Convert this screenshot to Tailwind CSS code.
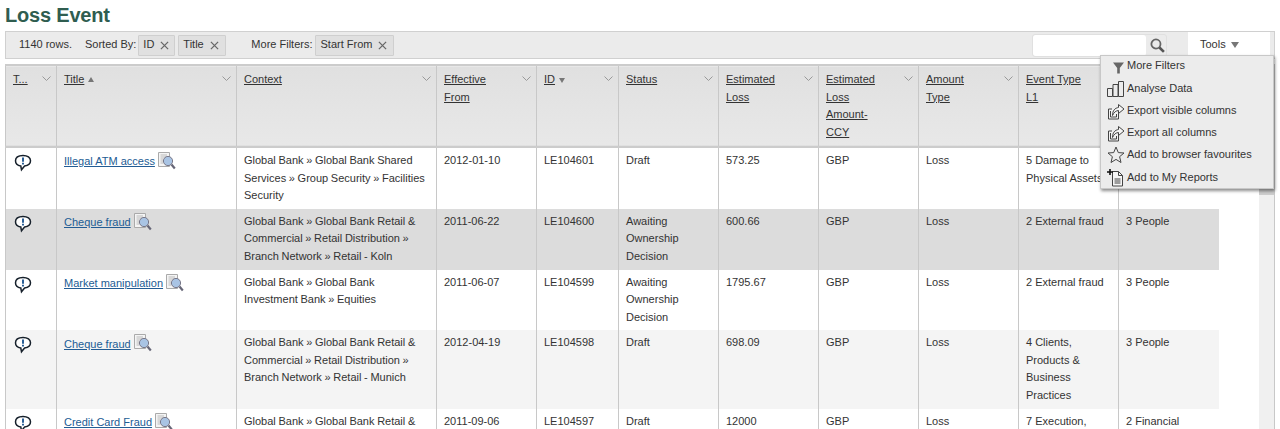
<!DOCTYPE html>
<html lang="en">
<head>
  <title>Loss Event</title>
  <meta charset="UTF-8">
  <script src="https://cdn.jsdelivr.net/npm/@tailwindcss/browser@4"></script>
</head>
<body class="h-[429px] overflow-hidden bg-white font-['Liberation_Sans',Arial,sans-serif] text-[11px] leading-[17.5px] text-[#333]">
  <svg class="hidden">
    <symbol id="chev" viewBox="0 0 9 5"><path d="M.5.5 4.5 4.5 8.5.5" fill="none" stroke="#999" stroke-width="1"/></symbol>
    <symbol id="x" viewBox="0 0 10 10"><path d="M1 1 9 9M9 1 1 9" fill="none" stroke="#666" stroke-width="1.4"/></symbol>
    <symbol id="alert" viewBox="0 0 18 18">
      <path d="M9 1.5C4.4 1.5 1.5 3.6 1.5 6.8 1.5 9.8 4 11.6 6.8 12L7.5 15.8 10.6 12C14 11.6 16.5 9.7 16.5 6.8 16.5 3.6 13.6 1.5 9 1.5Z" fill="#fff" stroke="#16202b" stroke-width="1.5"/>
      <path d="M9 3.4V7.8" stroke="#2a5f96" stroke-width="2"/><path d="M9 8.8V10.4" stroke="#2a5f96" stroke-width="2"/>
    </symbol>
    <symbol id="doc" viewBox="0 0 18 18">
      <path d="M.5.5H11.5V14.5H.5Z" fill="#f4f4f4" stroke="#aaa"/>
      <path d="M2.5 3H9M2.5 5H9M2.5 7H5M2.5 9H5M2.5 11H5" stroke="#bbb"/>
      <circle cx="10" cy="9" r="4.6" fill="#a9c4e4" stroke="#778"/>
      <path d="M13.5 12.5 16.8 16.5" stroke="#667" stroke-width="2.2"/>
    </symbol>
    <symbol id="share" viewBox="0 0 18 18">
      <path d="M5 7H1.5V17H11.5V11" fill="#f2f2f2" stroke="#444" stroke-width="1"/>
      <path d="M3.5 9V15H9.5V12" fill="none" stroke="#444" stroke-width="1"/>
      <path d="M5.5 13.5C5.5 8.5 8 6 11.5 5.5V2.5L17 7 11.5 11.5V8.5C9 8.7 7 10 5.5 13.5Z" fill="#f5f5f5" stroke="#444" stroke-width="1"/>
    </symbol>
  </svg>

  <div class="relative px-[5px]">
    <h1 class="pt-[2px] pb-[3px] text-[20px] leading-[26px] font-bold tracking-[-0.2px] text-[#2f5d50]">Loss Event</h1>

    <div class="flex h-[28px] items-center border border-[#d0d0d0] bg-[#ebebeb]">
      <span class="ml-[13px]">1140 rows.</span>
      <span class="ml-[13px]">Sorted By:</span>
      <span class="ml-[2px] flex h-[21px] w-[37px] items-center gap-[6px] rounded-[1px] border border-[#cfcfcf] bg-[#e0e0e0] pl-[4px]">ID<svg class="h-[9px] w-[9px]"><use href="#x"/></svg></span>
      <span class="ml-[3px] flex h-[21px] w-[48px] items-center gap-[6px] rounded-[1px] border border-[#cfcfcf] bg-[#e0e0e0] pl-[4px]">Title<svg class="h-[9px] w-[9px]"><use href="#x"/></svg></span>
      <span class="ml-[25px]">More Filters:</span>
      <span class="ml-[3px] flex h-[21px] w-[79px] items-center gap-[6px] rounded-[1px] border border-[#cfcfcf] bg-[#e0e0e0] pl-[4px]">Start From<svg class="h-[9px] w-[9px]"><use href="#x"/></svg></span>

      <div class="ml-auto flex h-[23px] w-[135px] items-center rounded-[3px] border border-[#e0e0e0]">
        <div class="h-full w-[114px] rounded-[3px] bg-white"></div>
        <svg class="ml-[3px] h-[17px] w-[17px]" viewBox="0 0 17 17"><circle cx="7" cy="7" r="4.6" fill="none" stroke="#666" stroke-width="1.8"/><path d="M10.5 10.5 15 15" stroke="#555" stroke-width="2.6"/></svg>
      </div>
      <div class="mr-[4px] ml-[21px] flex h-full w-[82px] items-center gap-[5px] bg-white pl-[12px]">
        Tools<span class="h-0 w-0 border-x-[4px] border-t-[6px] border-x-transparent border-t-[#777]"></span>
      </div>
    </div>

    <div class="mt-[5px] flex h-[365px] items-start overflow-hidden">
      <table class="w-[1213px] shrink-0 table-fixed border-collapse">
        <colgroup>
          <col class="w-[51px]"><col class="w-[180px]"><col class="w-[200px]"><col class="w-[100px]"><col class="w-[82px]"><col class="w-[100px]"><col class="w-[100px]"><col class="w-[100px]"><col class="w-[100px]"><col class="w-[100px]"><col class="w-[100px]">
        </colgroup>
        <thead>
          <tr class="h-[82px] border-y-2 border-[#cccccc] bg-gradient-to-b from-[#e0e0e0] to-[#e8e8e8] text-left align-top font-normal">
            <th class="border-l border-[#c8c8c8] pt-[5px] pr-[5px] pl-[7px] font-normal"><div class="flex justify-between"><span class="underline">T...</span><svg class="mt-[5px] h-[5px] w-[9px]"><use href="#chev"/></svg></div></th>
            <th class="border-l border-[#c8c8c8] pt-[5px] pr-[5px] pl-[7px] font-normal"><div class="flex justify-between"><span class="flex items-center gap-[4px]"><span class="underline">Title</span><span class="h-0 w-0 border-x-[3px] border-b-[5px] border-x-transparent border-b-[#777]"></span></span><svg class="mt-[5px] h-[5px] w-[9px]"><use href="#chev"/></svg></div></th>
            <th class="border-l border-[#c8c8c8] pt-[5px] pr-[5px] pl-[7px] font-normal"><div class="flex justify-between"><span class="underline">Context</span><svg class="mt-[5px] h-[5px] w-[9px]"><use href="#chev"/></svg></div></th>
            <th class="border-l border-[#c8c8c8] pt-[5px] pr-[5px] pl-[7px] font-normal"><div class="flex justify-between"><span class="underline">Effective<br>From</span><svg class="mt-[5px] h-[5px] w-[9px]"><use href="#chev"/></svg></div></th>
            <th class="border-l border-[#c8c8c8] pt-[5px] pr-[5px] pl-[7px] font-normal"><div class="flex justify-between"><span class="flex h-[17.5px] items-center gap-[4px]"><span class="underline">ID</span><span class="mt-[1px] h-0 w-0 border-x-[3px] border-t-[5px] border-x-transparent border-t-[#777]"></span></span><svg class="mt-[5px] h-[5px] w-[9px]"><use href="#chev"/></svg></div></th>
            <th class="border-l border-[#c8c8c8] pt-[5px] pr-[5px] pl-[7px] font-normal"><div class="flex justify-between"><span class="underline">Status</span><svg class="mt-[5px] h-[5px] w-[9px]"><use href="#chev"/></svg></div></th>
            <th class="border-l border-[#c8c8c8] pt-[5px] pr-[5px] pl-[7px] font-normal"><div class="flex justify-between"><span class="underline">Estimated<br>Loss</span><svg class="mt-[5px] h-[5px] w-[9px]"><use href="#chev"/></svg></div></th>
            <th class="border-l border-[#c8c8c8] pt-[5px] pr-[5px] pl-[7px] font-normal"><div class="flex justify-between"><span class="underline">Estimated<br>Loss<br>Amount-<br>CCY</span><svg class="mt-[5px] h-[5px] w-[9px]"><use href="#chev"/></svg></div></th>
            <th class="border-l border-[#c8c8c8] pt-[5px] pr-[5px] pl-[7px] font-normal"><div class="flex justify-between"><span class="underline">Amount<br>Type</span><svg class="mt-[5px] h-[5px] w-[9px]"><use href="#chev"/></svg></div></th>
            <th class="border-l border-[#c8c8c8] pt-[5px] pr-[5px] pl-[7px] font-normal"><div class="flex justify-between"><span class="underline">Event Type<br>L1</span><svg class="mt-[5px] h-[5px] w-[9px]"><use href="#chev"/></svg></div></th>
            <th class="border-l border-[#c8c8c8] pt-[5px] pr-[5px] pl-[7px] font-normal"><div class="flex justify-between"><span class="underline">Event Type<br>L2</span><svg class="mt-[5px] h-[5px] w-[9px]"><use href="#chev"/></svg></div></th>
          </tr>
        </thead>
        <tbody class="align-top [&_td]:border-l [&_td]:border-[#c8c8c8] [&_td]:px-[7px] [&_td]:py-[4px]">
          <tr class="h-[61px] bg-white">
            <td><svg class="mt-[2px] ml-[1px] h-[18px] w-[18px]"><use href="#alert"/></svg></td>
            <td class="!pt-[5px]"><a class="text-[#225c94] underline">Illegal ATM access</a><svg class="-mt-[1px] ml-[3px] inline-block h-[18px] w-[18px] align-top"><use href="#doc"/></svg></td>
            <td class="[word-spacing:-0.4px]">Global Bank » Global Bank Shared Services » Group Security » Facilities Security</td>
            <td>2012-01-10</td><td>LE104601</td><td>Draft</td><td>573.25</td><td>GBP</td><td>Loss</td>
            <td>5 Damage to Physical Assets</td><td>3 People</td>
          </tr>
          <tr class="h-[61px] bg-[#dcdcdc]">
            <td><svg class="mt-[2px] ml-[1px] h-[18px] w-[18px]"><use href="#alert"/></svg></td>
            <td class="!pt-[5px]"><a class="text-[#225c94] underline">Cheque fraud</a><svg class="-mt-[1px] ml-[3px] inline-block h-[18px] w-[18px] align-top"><use href="#doc"/></svg></td>
            <td class="[word-spacing:-0.4px]">Global Bank » Global Bank Retail &amp; Commercial » Retail Distribution » Branch Network » Retail - Koln</td>
            <td>2011-06-22</td><td>LE104600</td><td>Awaiting Ownership Decision</td><td>600.66</td><td>GBP</td><td>Loss</td>
            <td>2 External fraud</td><td>3 People</td>
          </tr>
          <tr class="h-[60px] bg-white">
            <td><svg class="mt-[2px] ml-[1px] h-[18px] w-[18px]"><use href="#alert"/></svg></td>
            <td class="!pt-[5px]"><a class="text-[#225c94] underline">Market manipulation</a><svg class="-mt-[1px] ml-[3px] inline-block h-[18px] w-[18px] align-top"><use href="#doc"/></svg></td>
            <td class="[word-spacing:-0.4px]">Global Bank » Global Bank Investment Bank » Equities</td>
            <td>2011-06-07</td><td>LE104599</td><td>Awaiting Ownership Decision</td><td>1795.67</td><td>GBP</td><td>Loss</td>
            <td>2 External fraud</td><td>3 People</td>
          </tr>
          <tr class="h-[79px] bg-[#f4f4f4]">
            <td><svg class="mt-[2px] ml-[1px] h-[18px] w-[18px]"><use href="#alert"/></svg></td>
            <td class="!pt-[6px]"><a class="text-[#225c94] underline">Cheque fraud</a><svg class="-mt-[2px] ml-[3px] inline-block h-[18px] w-[18px] align-top"><use href="#doc"/></svg></td>
            <td class="[word-spacing:-0.4px]">Global Bank » Global Bank Retail &amp; Commercial » Retail Distribution » Branch Network » Retail - Munich</td>
            <td>2012-04-19</td><td>LE104598</td><td>Draft</td><td>698.09</td><td>GBP</td><td>Loss</td>
            <td>4 Clients, Products &amp; Business Practices</td><td>3 People</td>
          </tr>
          <tr class="h-[61px] bg-white">
            <td><svg class="mt-[2px] ml-[1px] h-[18px] w-[18px]"><use href="#alert"/></svg></td>
            <td class="!pt-[5px]"><a class="text-[#225c94] underline">Credit Card Fraud</a><svg class="-mt-[1px] ml-[3px] inline-block h-[18px] w-[18px] align-top"><use href="#doc"/></svg></td>
            <td class="[word-spacing:-0.4px]">Global Bank » Global Bank Retail &amp; Commercial » Cards</td>
            <td>2011-09-06</td><td>LE104597</td><td>Draft</td><td>12000</td><td>GBP</td><td>Loss</td>
            <td>7 Execution, Delivery</td><td>2 Financial</td>
          </tr>
        </tbody>
      </table>
      <div class="ml-[40px] h-full w-[17px] border-r border-[#c8c8c8] bg-[#f0f0f0]"><div class="h-[131px] bg-[#cdcdcd]"></div></div>
    </div>

    <div class="absolute top-[55px] left-[1100px] w-[174px] border border-[#c8c8c8] bg-[#ececec] shadow-[1px_2px_3px_rgba(0,0,0,0.45)]">
      <div class="flex h-[22px] items-start pt-[1px] pl-[4px]">
        <svg class="mt-[5px] mr-[3px] ml-[8px] h-[12px] w-[11px]" viewBox="0 0 11 12"><path d="M0 .5H11L6.8 6V11.5H4.2V6Z" fill="#666"/></svg>More Filters
      </div>
      <div class="flex h-[22px] items-center gap-[2px] pl-[6px]">
        <svg class="h-[18px] w-[18px]" viewBox="0 0 18 18"><path d="M.5 8.5H5.5V16.5H.5ZM6 4.5H11V16.5H6ZM11.5 1.5H16.5V16.5H11.5Z" fill="none" stroke="#444"/></svg>Analyse Data
      </div>
      <div class="flex h-[22px] items-center gap-[2px] pl-[6px]"><svg class="h-[18px] w-[18px]"><use href="#share"/></svg>Export visible columns</div>
      <div class="flex h-[22px] items-center gap-[2px] pl-[6px]"><svg class="h-[18px] w-[18px]"><use href="#share"/></svg>Export all columns</div>
      <div class="flex h-[23px] items-center gap-[2px] pb-[2px] pl-[6px]">
        <svg class="h-[18px] w-[18px]" viewBox="0 0 18 18"><path d="M9 1 11.3 6.6 17 7 12.6 10.7 14 16.5 9 13.4 4 16.5 5.4 10.7 1 7 6.7 6.6Z" fill="none" stroke="#444"/></svg>Add to browser favourites
      </div>
      <div class="flex h-[21px] items-center gap-[2px] pl-[6px]">
        <svg class="h-[18px] w-[18px]" viewBox="0 0 18 18"><path d="M5.5 2.5H11.5L15.5 6.5V17H5.5Z" fill="#f5f5f5" stroke="#444"/><path d="M11.5 2.5V6.5H15.5M7.5 10H13.5M7.5 12H13.5M7.5 14H13.5" fill="none" stroke="#444"/><path d="M3 0V6M0 3H6" stroke="#111" stroke-width="1.6"/></svg>Add to My Reports
      </div>
    </div>
  </div>
</body>
</html>
